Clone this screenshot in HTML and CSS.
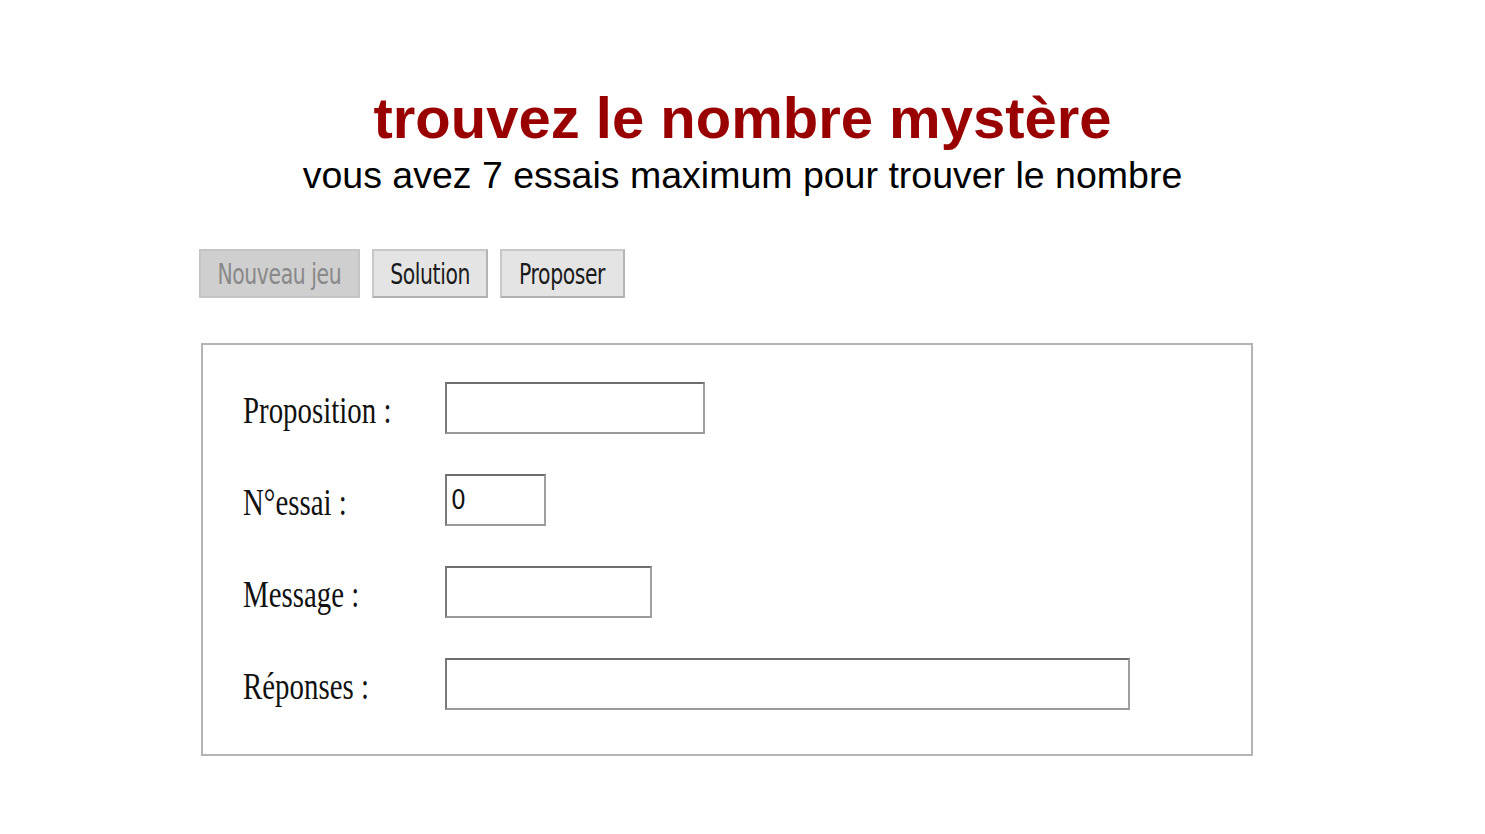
FILE: index.html
```html
<!DOCTYPE html>
<html lang="fr">
<head>
<meta charset="utf-8">
<title>trouvez le nombre mystère</title>
<link rel="stylesheet" href="styles.css">
</head>
<body>
<header class="head">
  <h1 class="title">trouvez le nombre mystère</h1>
  <p class="subtitle">vous avez 7 essais maximum pour trouver le nombre</p>
</header>
<main class="game">
  <div class="buttons">
    <button class="btn btn-disabled" disabled><span class="btn-text">Nouveau jeu</span></button>
    <button class="btn"><span class="btn-text">Solution</span></button>
    <button class="btn"><span class="btn-text">Proposer</span></button>
  </div>
  <div class="panel">
    <div class="row">
      <span class="label">Proposition :</span>
      <input class="field field-prop" type="text">
    </div>
    <div class="row">
      <span class="label">N°essai :</span>
      <input class="field field-essai" type="text" value="0">
    </div>
    <div class="row">
      <span class="label">Message :</span>
      <input class="field field-msg" type="text">
    </div>
    <div class="row">
      <span class="label">Réponses :</span>
      <input class="field field-rep" type="text">
    </div>
  </div>
</main>
</body>
</html>
```
FILE: styles.css
```css
html, body {
  margin: 0;
  padding: 0;
  background: #ffffff;
}
body {
  width: 1485px;
  height: 834px;
  overflow: hidden;
  font-family: "Liberation Sans", Arial, sans-serif;
}
.head {
  display: flex;
  flex-direction: column;
  align-items: center;
  padding-top: 85px;
}
.title {
  margin: 0;
  font-family: "Liberation Sans", Arial, sans-serif;
  font-weight: bold;
  font-size: 58px;
  line-height: 66px;
  color: #990000;
}
.subtitle {
  margin: 1px 0 0 0;
  font-size: 37.5px;
  line-height: 46px;
  color: #000000;
}
.game {
  padding-left: 199px;
  padding-top: 51px;
}
.buttons {
  display: flex;
  gap: 12px;
}
.btn {
  height: 49px;
  padding: 0;
  border: 2px solid #c8c8c8;
  border-right-color: #b4b4b4;
  border-bottom-color: #b0b0b0;
  background: #e4e4e4;
  font-family: "DejaVu Sans Condensed", "DejaVu Sans", sans-serif;
  font-size: 29px;
  color: #1a1a1a;
  display: flex;
  align-items: center;
  justify-content: center;
  white-space: nowrap;
}
.btn:nth-child(1) { width: 161px; }
.btn:nth-child(2) { width: 116px; }
.btn:nth-child(3) { width: 125px; }
.btn-text {
  display: inline-block;
  transform: scaleX(0.78);
  letter-spacing: -0.5px;
  white-space: nowrap;
}
.btn-disabled {
  background: #cfcfcf;
  border-color: #c4c4c4;
  color: #888888;
}
.panel {
  margin-top: 45px;
  margin-left: 2px;
  width: 1052px;
  height: 413px;
  border: 2px solid #b4b4b4;
  box-sizing: border-box;
  padding-top: 37px;
  display: flex;
  flex-direction: column;
  gap: 40px;
}
.row {
  display: flex;
  align-items: center;
  height: 52px;
}
.label {
  width: 202px;
  padding-left: 40px;
  font-family: "Liberation Serif", "Times New Roman", serif;
  font-size: 38px;
  color: #111;
  display: inline-block;
  transform: scaleX(0.76);
  transform-origin: 40px 50%;
  white-space: nowrap;
  position: relative;
  top: 2px;
}
.field {
  box-sizing: border-box;
  height: 52px;
  margin: 0;
  padding: 0 4px;
  border: 2px solid #8a8a8a;
  border-top-color: #6e6e6e;
  border-left-color: #7a7a7a;
  border-bottom-color: #9a9a9a;
  border-right-color: #a0a0a0;
  background: #fff;
  font-family: "DejaVu Sans Condensed", "DejaVu Sans", sans-serif;
  font-size: 26px;
  color: #111;
}
.field-prop { width: 260px; }
.field-essai { width: 101px; }
.field-msg { width: 207px; }
.field-rep { width: 685px; }
```
